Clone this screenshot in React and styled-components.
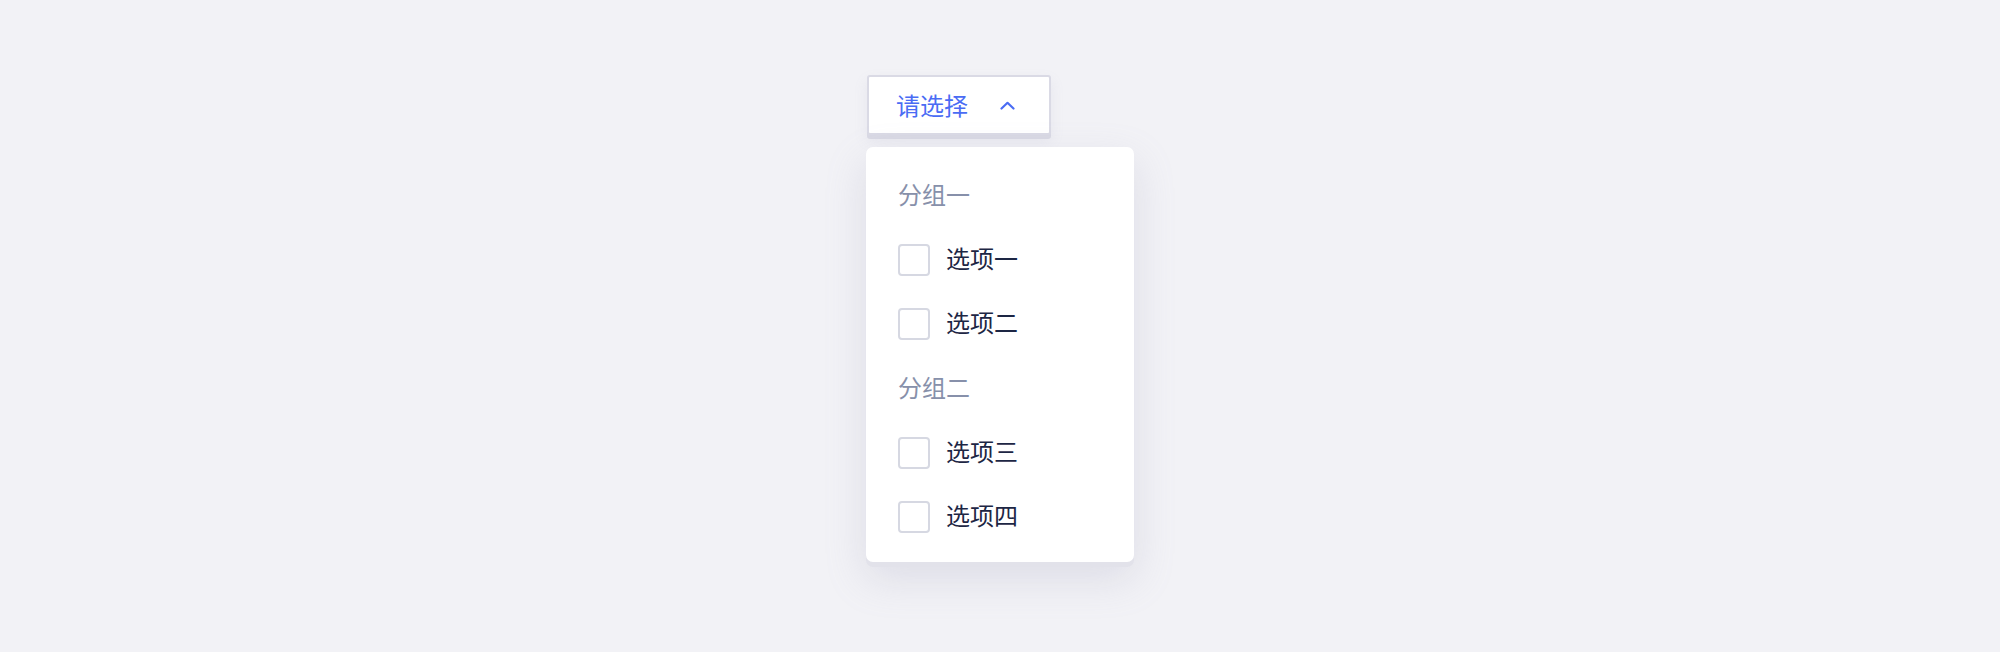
import React from "react";
import styled, { createGlobalStyle } from "styled-components";

const Global = createGlobalStyle`
  html, body { margin: 0; padding: 0; background: #f2f2f6; }
  body { font-family: "Noto Sans CJK SC", "Noto Sans", sans-serif; }
`;

const Page = styled.div`
  display: flex;
  justify-content: center;
  padding-top: 75px;
  min-height: 652px;
  box-sizing: border-box;
`;

const Anchor = styled.div`
  position: relative;
  width: 268px;
  display: flex;
  padding-left: 1px;
  box-sizing: border-box;
`;

const Trigger = styled.button`
  width: 184px;
  height: 60px;
  box-sizing: border-box;
  display: flex;
  align-items: center;
  justify-content: space-between;
  padding: 0 34px 0 27px;
  background: #fff;
  border: 2px solid #dadae5;
  border-radius: 3px;
  box-shadow: 0 4px 0 #d9d9e4, 0 6px 14px rgba(150, 150, 180, 0.12);
  font-family: inherit;
  font-size: 24px;
  line-height: 1;
  color: #4a6cf4;
  cursor: pointer;
`;

const Menu = styled.div`
  position: absolute;
  left: 0;
  top: 72px;
  width: 268px;
  box-sizing: border-box;
  background: #fff;
  border-radius: 7px;
  padding: 16px 0 13px;
  box-shadow: 0 5px 0 #e2e2ea, 0 16px 40px rgba(150, 150, 180, 0.24);
  display: flex;
  flex-direction: column;
`;

const GroupTitle = styled.div`
  height: 65px;
  display: flex;
  align-items: center;
  padding: 0 0 5px 32px;
  box-sizing: border-box;
  font-size: 24px;
  color: #8790aa;
`;

const Option = styled.label`
  height: 64px;
  display: flex;
  align-items: center;
  gap: 16px;
  padding-left: 32px;
  font-size: 24px;
  color: #1d2644;
  cursor: pointer;
`;

const OptionText = styled.span`
  padding-bottom: 5px;
`;

const Box = styled.span`
  width: 32px;
  height: 32px;
  box-sizing: border-box;
  border: 2px solid #d6d8e2;
  border-radius: 4px;
  background: #fff;
`;

const Chevron = () => (
  <svg width="15" height="9" viewBox="0 0 15 9" fill="none">
    <path d="M1.5 7.5 L7.5 1.8 L13.5 7.5" stroke="#4a6cf4" strokeWidth="2.2" strokeLinecap="round" strokeLinejoin="round" />
  </svg>
);

const groups = [
  { title: "分组一", items: ["选项一", "选项二"] },
  { title: "分组二", items: ["选项三", "选项四"] },
];

export default function App() {
  return (
    <>
      <Global />
      <Page>
        <Anchor>
          <Trigger>
            <span>请选择</span>
            <Chevron />
          </Trigger>
          <Menu>
            {groups.map((g) => (
              <React.Fragment key={g.title}>
                <GroupTitle>{g.title}</GroupTitle>
                {g.items.map((it) => (
                  <Option key={it}>
                    <Box />
                    <OptionText>{it}</OptionText>
                  </Option>
                ))}
              </React.Fragment>
            ))}
          </Menu>
        </Anchor>
      </Page>
    </>
  );
}
